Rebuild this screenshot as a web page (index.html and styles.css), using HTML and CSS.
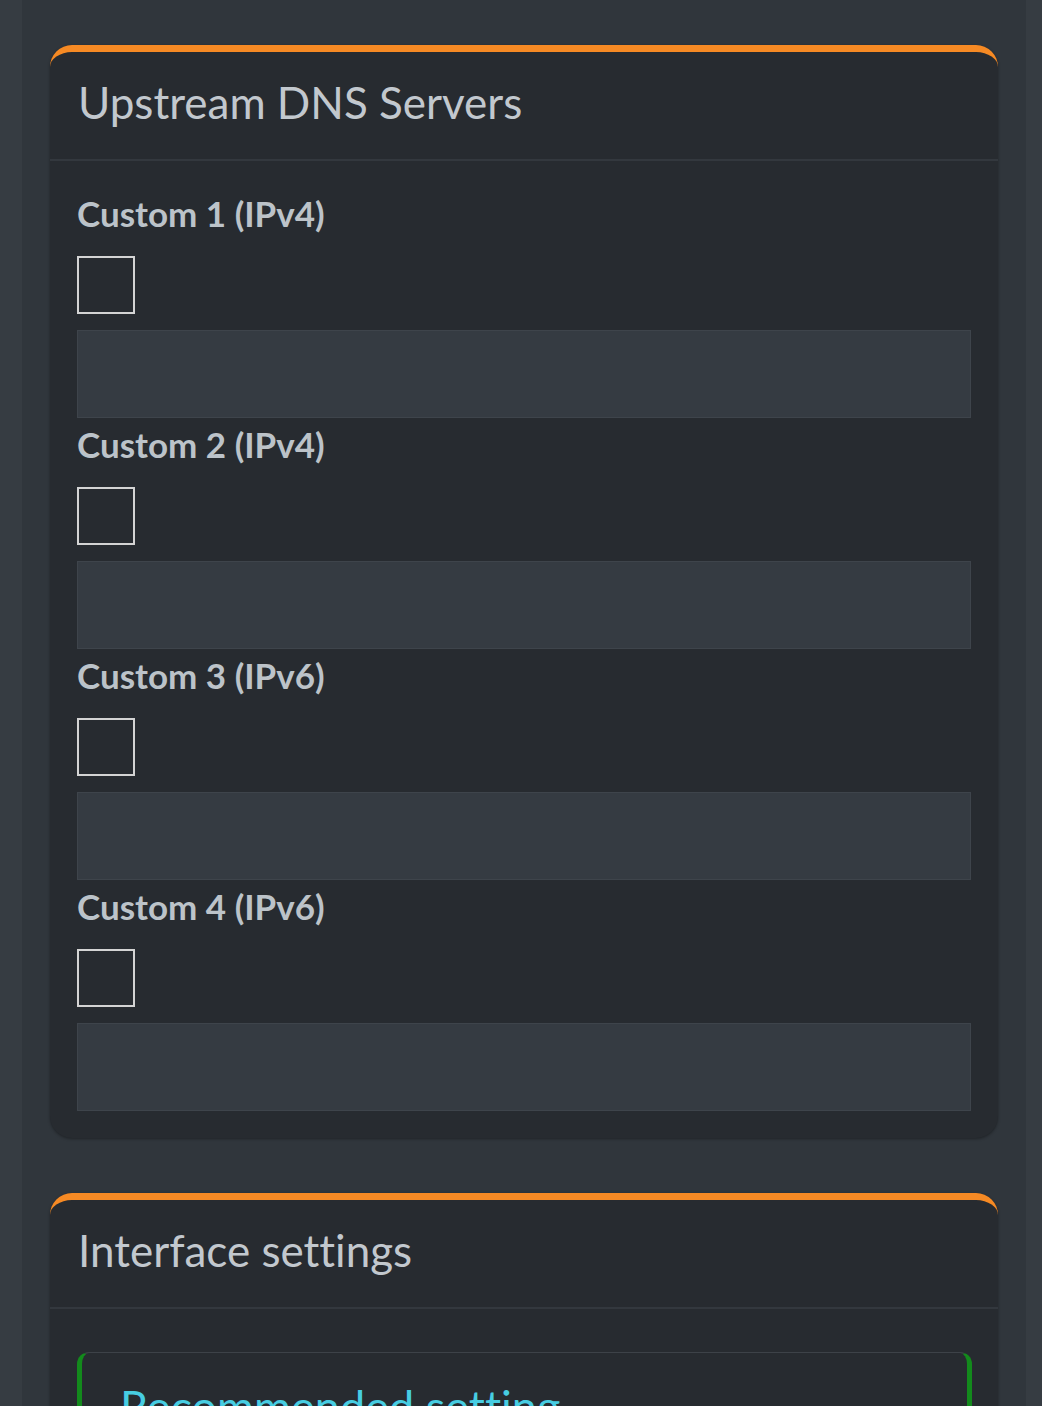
FILE: index.html
```html
<!DOCTYPE html>
<html lang="en">
<head>
<meta charset="utf-8">
<title>Settings</title>
<link rel="stylesheet" href="styles.css">
</head>
<body>
<div class="wrapper">
  <section class="card">
    <div class="card-header"><h3 class="card-title">Upstream DNS Servers</h3></div>
    <div class="card-body">
      <div class="group">
        <label class="group-label">Custom 1 (IPv4)</label>
        <span class="check"></span>
        <div class="text-input"></div>
      </div>
      <div class="group">
        <label class="group-label">Custom 2 (IPv4)</label>
        <span class="check"></span>
        <div class="text-input"></div>
      </div>
      <div class="group">
        <label class="group-label">Custom 3 (IPv6)</label>
        <span class="check"></span>
        <div class="text-input"></div>
      </div>
      <div class="group">
        <label class="group-label">Custom 4 (IPv6)</label>
        <span class="check"></span>
        <div class="text-input"></div>
      </div>
    </div>
  </section>
  <section class="card">
    <div class="card-header"><h3 class="card-title">Interface settings</h3></div>
    <div class="card-body card-body-second">
      <div class="callout">
        <h4 class="callout-title">Recommended setting</h4>
      </div>
    </div>
  </section>
</div>
</body>
</html>
```
FILE: styles.css
```css
html, body {
  margin: 0;
  padding: 0;
}
body {
  background: #363c42;
  font-family: Lato, "Open Sans", sans-serif;
  font-variant-ligatures: none;
  color: #bec5cb;
  height: 1406px;
  overflow: hidden;
}
.wrapper {
  margin: 0 16px 0 22px;
  background: #30363c;
  min-height: 1406px;
  padding: 45px 28px 0 28px;
  box-sizing: border-box;
}
.card {
  background: #272b30;
  border-top: 7px solid #f68a24;
  border-radius: 22px;
  box-shadow: 0 1px 3px rgba(0, 0, 0, 0.35);
  margin-bottom: 55px;
}
.card-header {
  padding: 25px 28px 32px 28px;
  border-bottom: 2px solid #33383e;
}
.card-title {
  margin: 0;
  font-size: 44px;
  line-height: 50px;
  font-weight: 400;
  color: #c2c8ce;
}
.card-body {
  padding: 27px 28px 27px 27px;
}
.group {
  display: flex;
  flex-direction: column;
  align-items: flex-start;
}
.group + .group {
  margin-top: 1px;
}
.group-label {
  font-size: 35px;
  line-height: 50px;
  font-weight: 700;
  color: #bcc3c9;
}
.check {
  display: block;
  width: 58px;
  height: 58px;
  box-sizing: border-box;
  border: 2px solid #d4d4d4;
  margin-top: 18px;
}
.text-input {
  align-self: stretch;
  height: 88px;
  box-sizing: border-box;
  margin-top: 16px;
  margin-right: -1px;
  background: #353b42;
  border: 1px solid #3e444b;
}
.card-body-second {
  padding-top: 43px;
}
.callout {
  border-top: 1px solid #3d4248;
  border-left: 5px solid #138a1c;
  border-right: 5px solid #138a1c;
  border-radius: 12px;
  padding: 28px 30px 40px 38px;
  margin-right: -2px;
}
.callout-title {
  margin: 0;
  font-size: 45px;
  line-height: 50px;
  font-weight: 400;
  color: #47cde2;
}
```
